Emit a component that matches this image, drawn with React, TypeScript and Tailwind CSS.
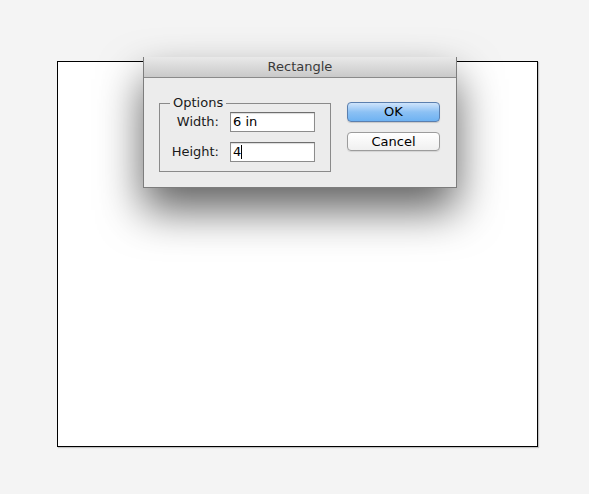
function Field({ label, value, caret }: { label: string; value: string; caret?: boolean }) {
  return (
    <div className="flex items-center h-[20px]">
      <span className="w-[56px] text-right text-[13px] text-[#1a1a1a]">{label}</span>
      <div className="ml-[11px] w-[85px] h-[20px] bg-white border border-[#8c8c8c] border-t-[#6e6e6e] shadow-[inset_0_1px_1px_rgba(0,0,0,0.15)] flex items-center pl-[2px] text-[13px] text-black">
        {value}
        {caret && <span className="w-px h-[14px] bg-black" />}
      </div>
    </div>
  )
}

function DialogButton({ label, primary }: { label: string; primary?: boolean }) {
  return (
    <button
      className={
        primary
          ? "w-[93px] h-[20px] rounded-[4px] border border-[#5b7fae] bg-gradient-to-b from-[#cfe4fb] via-[#8cc1f4] to-[#6eb2f2] text-[13px] text-black flex items-center justify-center shadow-[0_1px_1px_rgba(0,0,0,0.15)]"
          : "w-[93px] h-[19px] rounded-[4px] border border-[#9c9c9c] bg-gradient-to-b from-white to-[#f0f0f0] text-[13px] text-black flex items-center justify-center shadow-[0_1px_1px_rgba(0,0,0,0.1)]"
      }
    >
      {label}
    </button>
  )
}

export default function App() {
  return (
    <div className="relative w-[589px] h-[494px] bg-[#f4f4f4] pt-[61px] pl-[57px] font-['DejaVu_Sans',sans-serif]">
      <div className="w-[481px] h-[386px] bg-white border border-black shadow-[1px_1px_1px_rgba(0,0,0,0.2)]" />

      <div className="absolute left-[143px] top-[57px] w-[314px] h-[131px] flex flex-col bg-[#ececec] border-x border-b border-[#7d7d7d] shadow-[0_22px_44px_rgba(0,0,0,0.62)]">
        <div className="h-[21px] shrink-0 flex items-center justify-center bg-gradient-to-b from-[#e9e9e9] to-[#c9c9c9] border-b border-[#8a8a8a] text-[13px] text-[#3a3a3a]">
          Rectangle
        </div>
        <div className="flex pl-[15px] pt-[17px]">
          <fieldset className="w-[172px] h-[77px] border border-[#8a8a8a] pl-[3px] pt-[1px]">
            <legend className="ml-[7px] px-[3px] text-[13px] leading-[16px] text-[#1a1a1a]">Options</legend>
            <div className="flex flex-col gap-[10px]">
              <Field label="Width:" value="6 in" />
              <Field label="Height:" value="4" caret />
            </div>
          </fieldset>
          <div className="ml-[16px] mt-[7px] flex flex-col gap-[10px]">
            <DialogButton label="OK" primary />
            <DialogButton label="Cancel" />
          </div>
        </div>
      </div>
    </div>
  )
}
